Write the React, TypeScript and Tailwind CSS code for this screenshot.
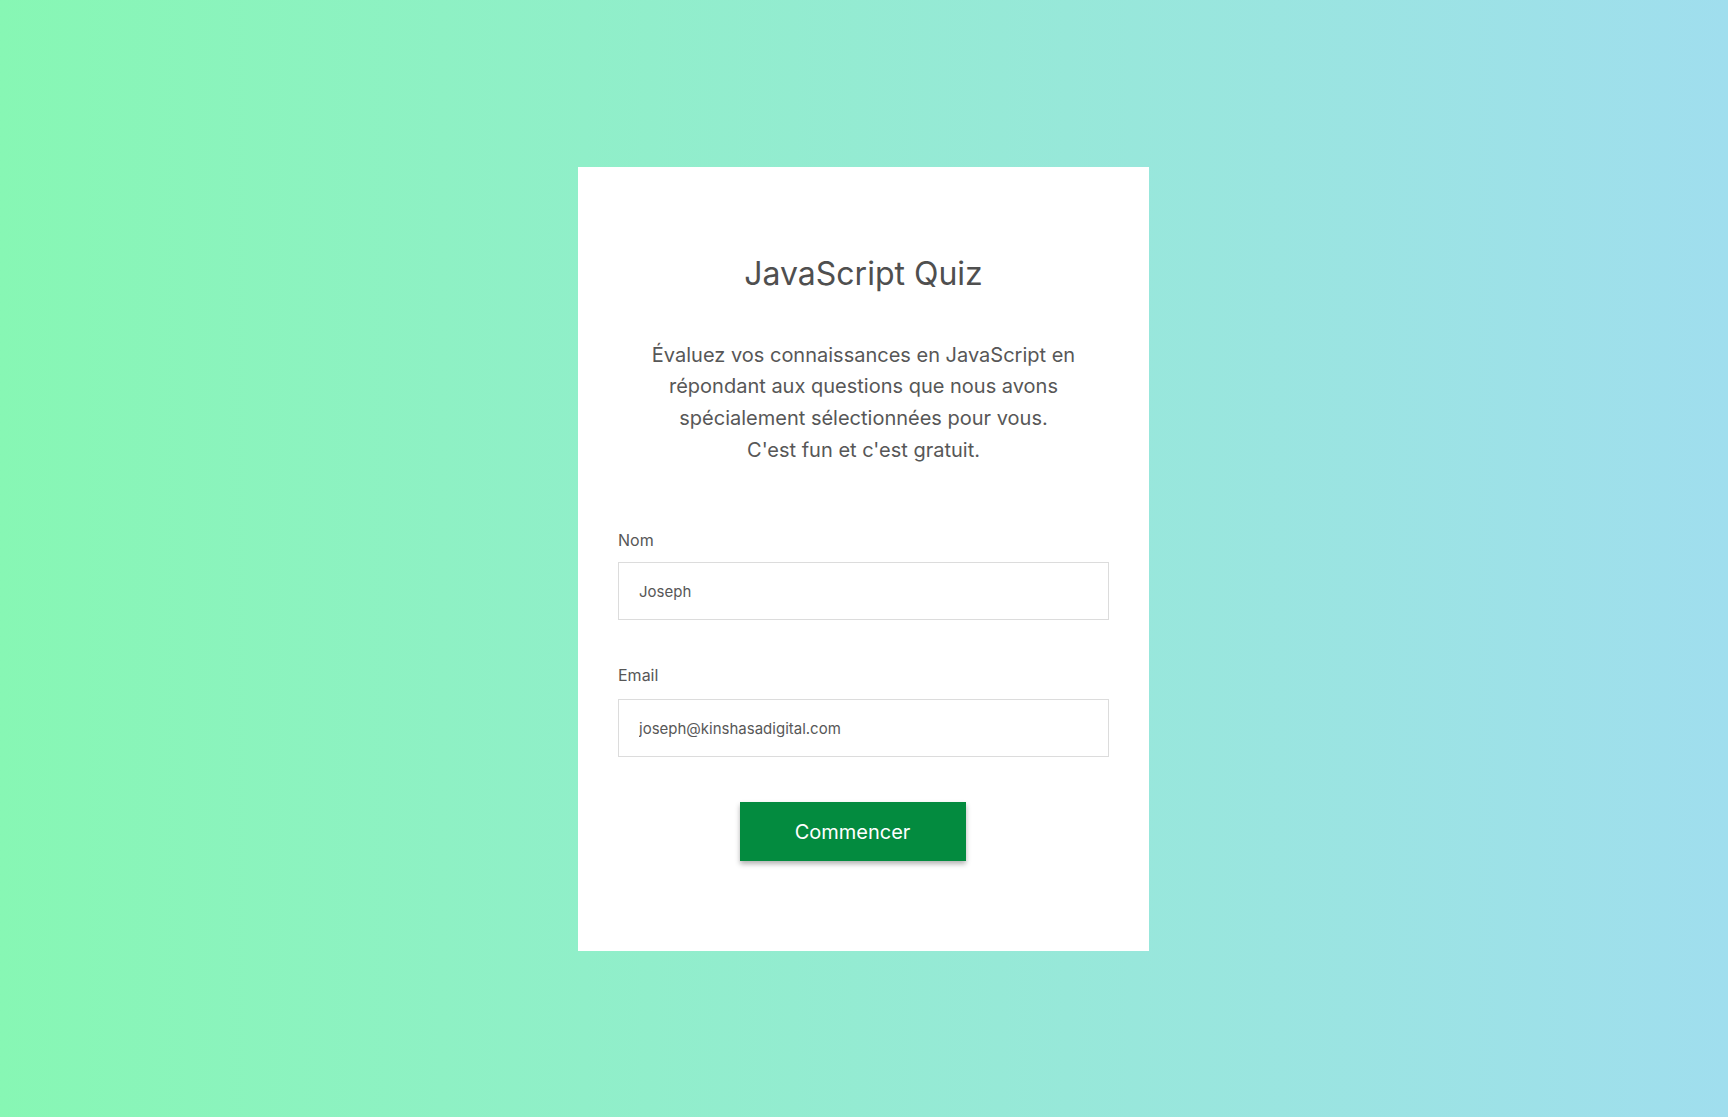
import React from "react";

export default function App() {
  return (
    <div
      className="w-full h-[1117px] flex items-center justify-center pr-[1px] bg-gradient-to-r from-[#87f7b4] to-[#a0deee]"
      style={{ fontFamily: "Inter, 'Noto Sans', sans-serif" }}
    >
      <div className="w-[571px] h-[784px] bg-white px-10 pt-[83px] flex flex-col">
        <h1 className="text-center text-[32px] leading-[48px] text-[#4f4f4f] font-normal">
          JavaScript Quiz
        </h1>
        <p className="mt-[42px] text-center text-[20px] leading-[31.7px] text-[#575757]">
          Évaluez vos connaissances en JavaScript en
          <br />
          répondant aux questions que nous avons
          <br />
          spécialement sélectionnées pour vous.
          <br />
          C'est fun et c'est gratuit.
        </p>
        <label className="mt-[62px] block text-[16px] leading-[24px] text-[#575757]">Nom</label>
        <input
          readOnly
          value="Joseph"
          className="mt-[10px] h-[58px] w-full border border-[#dcdcdc] px-5 text-[15px] text-[#575757] outline-none"
        />
        <label className="mt-[43px] block text-[16px] leading-[24px] text-[#575757]">Email</label>
        <input
          readOnly
          value="joseph@kinshasadigital.com"
          className="mt-[12px] h-[58px] w-full border border-[#dcdcdc] px-5 text-[15px] text-[#575757] outline-none"
        />
        <div className="mt-[45px] flex justify-center pr-[22px]">
          <button className="w-[226px] h-[59px] bg-[#038b3f] text-white text-[20px] shadow-[0_3px_5px_rgba(0,0,0,0.3)]">
            Commencer
          </button>
        </div>
      </div>
    </div>
  );
}
